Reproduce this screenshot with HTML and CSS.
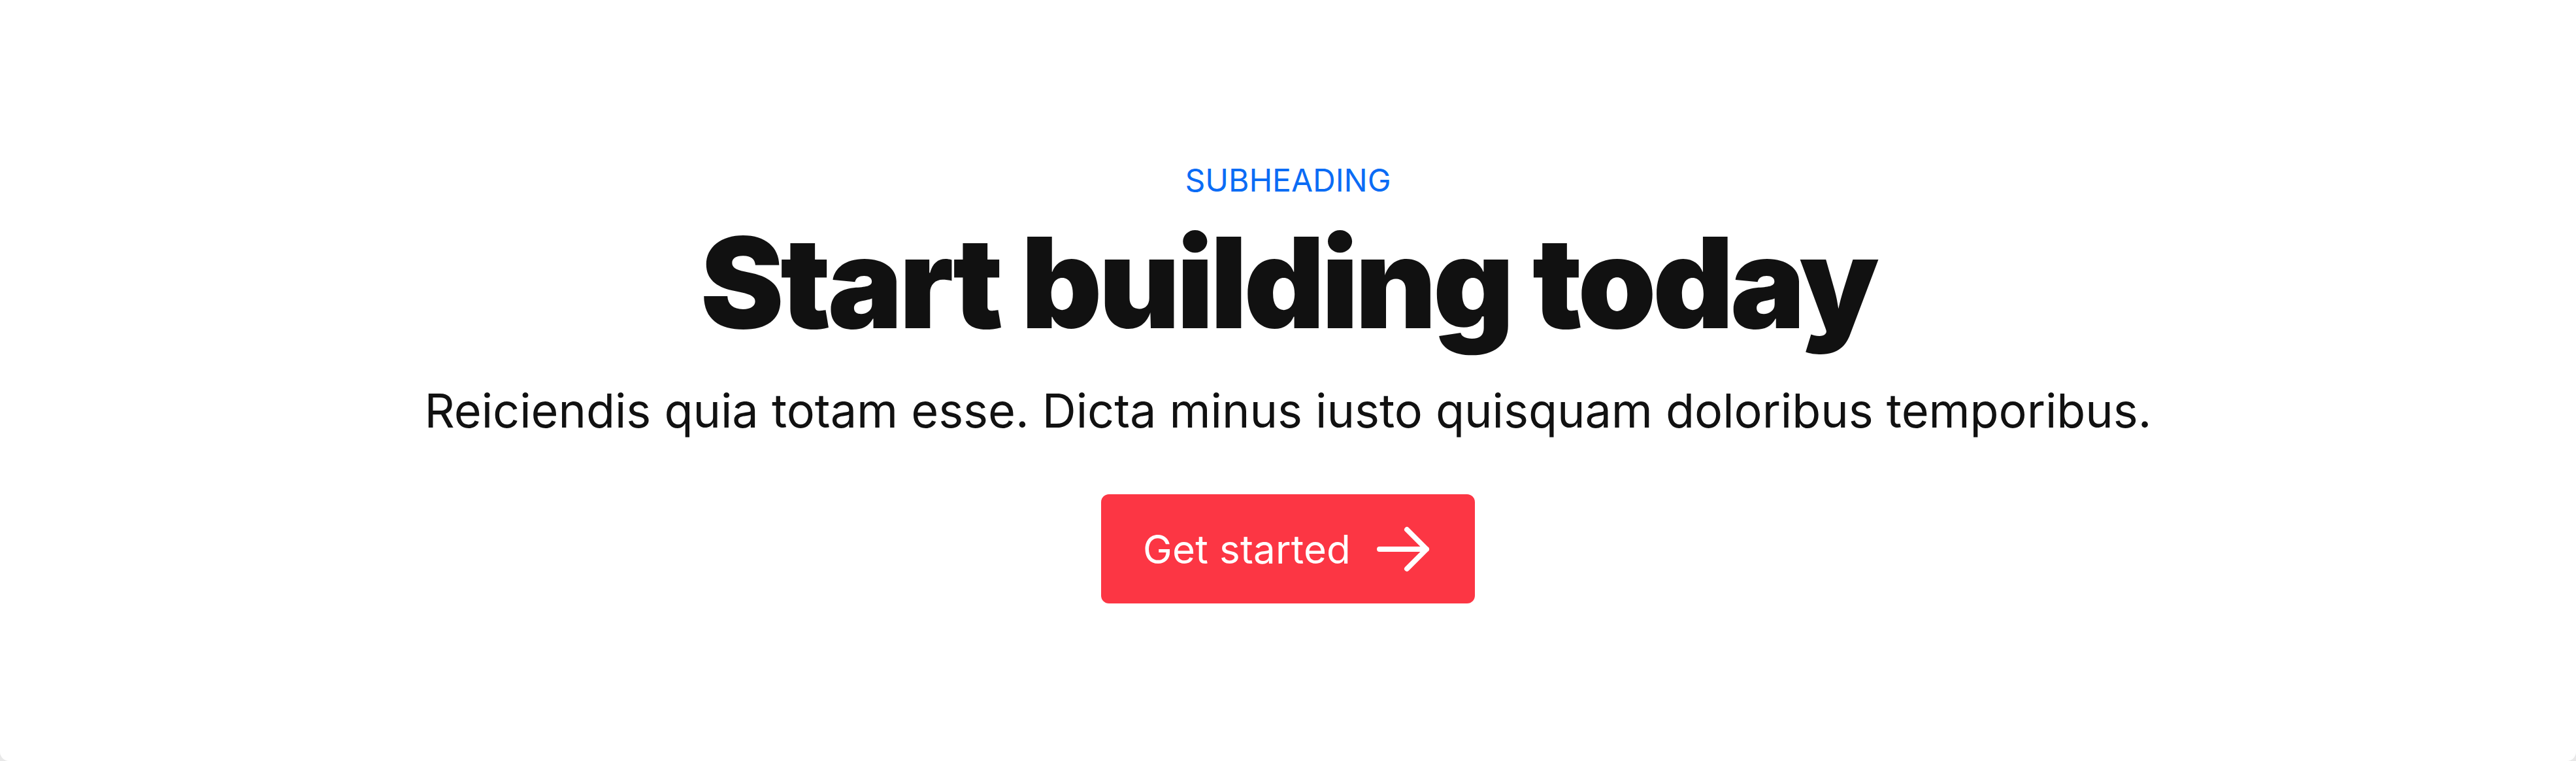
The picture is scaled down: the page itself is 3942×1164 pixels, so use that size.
FILE: index.html
```html
<!DOCTYPE html>
<html lang="en">
<head>
<meta charset="utf-8">
<title>Start building today</title>
<link rel="stylesheet" href="styles.css">
</head>
<body>
<main class="page">
  <section class="hero">
    <p class="subheading">SUBHEADING</p>
    <h1 class="title">Start building today</h1>
    <p class="lead">Reiciendis quia totam esse. Dicta minus iusto quisquam doloribus temporibus.</p>
    <a class="cta" href="#">
      <span class="cta-label">Get started</span>
      <svg class="cta-icon" viewBox="0 0 24 24" fill="none" stroke="currentColor" stroke-width="2" stroke-linecap="round" stroke-linejoin="round" aria-hidden="true">
        <path d="M13.5 4.5 21 12l-7.5 7.5M21 12H3"/>
      </svg>
    </a>
  </section>
</main>
</body>
</html>
```

FILE: styles.css
```css
html, body {
  margin: 0;
  padding: 0;
}

body {
  background: #e8e8e8;
  font-family: Inter, "Noto Sans", "Liberation Sans", sans-serif;
  color: #111111;
}

.page {
  background: #ffffff;
  height: 1164px;
  border-radius: 0 0 14px 14px;
  box-sizing: border-box;
}

.hero {
  display: flex;
  flex-direction: column;
  align-items: center;
  text-align: center;
  padding-top: 240px;
}

.subheading {
  margin: 0;
  font-size: 48px;
  line-height: 72px;
  font-weight: 400;
  color: #0b6cf5;
}

.title {
  margin: 24px 0 0;
  font-size: 192px;
  line-height: 192px;
  font-weight: 900;
  letter-spacing: -5.3px;
  color: #111111;
}

.lead {
  margin: 52px 0 0;
  font-size: 72px;
  line-height: 96px;
  font-weight: 400;
  letter-spacing: -0.06px;
  color: #111111;
}

.cta {
  margin-top: 80px;
  display: inline-flex;
  align-items: center;
  gap: 32px;
  padding: 36px 62px 35px 64px;
  background: #fc3644;
  border-radius: 12px;
  color: #ffffff;
  text-decoration: none;
  font-size: 60px;
  line-height: 96px;
  letter-spacing: 0.2px;
}

.cta-icon {
  width: 96px;
  height: 96px;
  display: block;
}
```
